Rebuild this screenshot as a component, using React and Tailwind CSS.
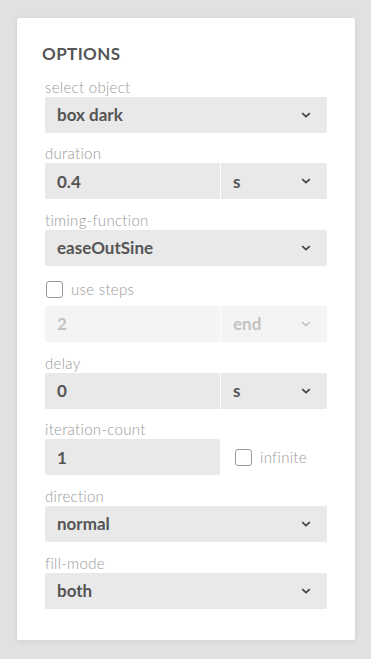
import { useState } from 'react'

const font = { fontFamily: 'Lato, "Open Sans", sans-serif' }

function Chevron({ dim }) {
  return (
    <svg width="10" height="6" viewBox="0 0 10 6" className={dim ? 'text-[#c4c4c4]' : 'text-[#444]'}>
      <path d="M1.2 1.2 L5 4.6 L8.8 1.2" fill="none" stroke="currentColor" strokeWidth="1.8" />
    </svg>
  )
}

function Label({ children }) {
  return <div className="mt-[10.7px] h-5 text-[15px] leading-5 font-light text-[#999] tracking-[0.3px]">{children}</div>
}

function Select({ value, dim, className = '' }) {
  return (
    <div
      className={`h-9 flex items-center justify-between pl-3 pr-[16px] text-[17px] font-bold ${dim ? 'bg-[#f4f4f4] text-[#c2c2c2]' : 'bg-[#e9e9e9] text-[#555]'} ${className}`}
    >
      <span>{value}</span>
      <Chevron dim={dim} />
    </div>
  )
}

function Input({ value, dim, className = '' }) {
  return (
    <div className={`h-9 flex items-center pl-3 text-[17px] font-bold ${dim ? 'bg-[#f4f4f4] text-[#c2c2c2]' : 'bg-[#e9e9e9] text-[#555]'} ${className}`}>
      {value}
    </div>
  )
}

function Check({ label }) {
  const [on, setOn] = useState(false)
  return (
    <label className="flex items-center gap-2 cursor-pointer" onClick={() => setOn(!on)}>
      <span className={`w-[17px] h-[17px] rounded-[3px] border border-[#999] ${on ? 'bg-[#777]' : 'bg-white'}`} />
      <span className="text-[15px] font-light text-[#999] tracking-[0.3px]">{label}</span>
    </label>
  )
}

export default function App() {
  return (
    <div className="min-h-screen bg-[#e1e1e1] pt-[18px] px-[17px] pb-5" style={font}>
      <div className="w-[338px] bg-white rounded-[2px] shadow-[0_1px_6px_rgba(0,0,0,0.08)] px-7 pt-6 pb-[31px]">
        <h2 className="-ml-[3px] text-[17px] leading-6 font-bold tracking-[0.4px] text-[#555]">OPTIONS</h2>

        <Label>select object</Label>
        <Select value="box dark" className="rounded-[2px]" />

        <Label>duration</Label>
        <div className="flex gap-px">
          <Input value="0.4" className="w-[175px] rounded-l-[2px]" />
          <Select value="s" className="flex-1 rounded-r-[2px]" />
        </div>

        <Label>timing-function</Label>
        <Select value="easeOutSine" className="rounded-[2px]" />

        <div className="mt-[13px] h-5 flex items-center pl-px">
          <Check label="use steps" />
        </div>
        <div className="mt-[7px] flex gap-px">
          <Input value="2" dim className="w-[175px] rounded-l-[2px]" />
          <Select value="end" dim className="flex-1 rounded-r-[2px]" />
        </div>

        <Label>delay</Label>
        <div className="flex gap-px">
          <Input value="0" className="w-[175px] rounded-l-[2px]" />
          <Select value="s" className="flex-1 rounded-r-[2px]" />
        </div>

        <Label>iteration-count</Label>
        <div className="flex items-center">
          <Input value="1" className="w-[175px] rounded-[2px]" />
          <div className="ml-[15px]">
            <Check label="infinite" />
          </div>
        </div>

        <Label>direction</Label>
        <Select value="normal" className="rounded-[2px]" />

        <Label>fill-mode</Label>
        <Select value="both" className="rounded-[2px]" />
      </div>
    </div>
  )
}
